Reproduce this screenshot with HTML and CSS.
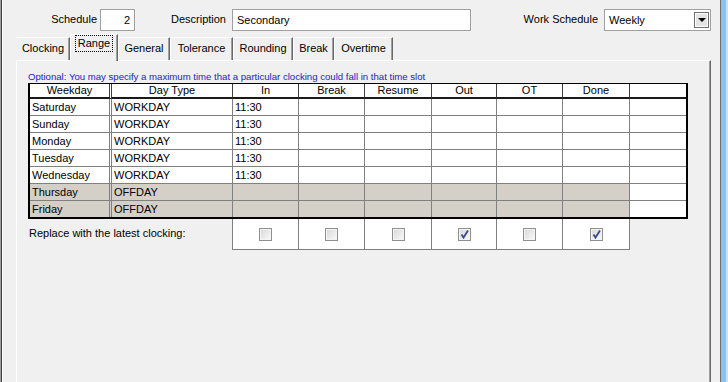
FILE: index.html
```html
<!DOCTYPE html>
<html lang="en">
<head>
    <meta charset="UTF-8">
    <title>Schedule - Range</title>
    <meta name="viewport" content="width=device-width, initial-scale=1.0">
    <link rel="stylesheet" href="styles.css">
</head>
<body>
    <div class="window">
        <div class="form_row">
            <label class="field_label lbl_schedule">Schedule</label>
            <div class="textbox tb_schedule">2</div>
            <label class="field_label lbl_desc">Description</label>
            <div class="textbox tb_desc">Secondary</div>
            <label class="field_label lbl_work">Work Schedule</label>
            <div class="combo">
                <span class="combo_text">Weekly</span>
                <span class="combo_btn"><span class="arrow"></span></span>
            </div>
        </div>

        <div class="tabs">
            <div class="tab tab_clocking">Clocking</div>
            <div class="tab tab_range active"><span class="focus">Range</span></div>
            <div class="tab tab_general">General</div>
            <div class="tab tab_tolerance">Tolerance</div>
            <div class="tab tab_rounding">Rounding</div>
            <div class="tab tab_break">Break</div>
            <div class="tab tab_overtime">Overtime</div>
        </div>

        <div class="panel">
            <p class="hint">Optional: You may specify a maximum time that a particular clocking could fall in that time slot</p>

            <div class="grid">
                <div class="cell head fixed">Weekday</div>
                <div class="cell head">Day Type</div>
                <div class="cell head">In</div>
                <div class="cell head">Break</div>
                <div class="cell head">Resume</div>
                <div class="cell head">Out</div>
                <div class="cell head">OT</div>
                <div class="cell head">Done</div>
                <div class="cell head last"></div>

                <div class="cell fixed">Saturday</div>
                <div class="cell">WORKDAY</div>
                <div class="cell">11:30</div>
                <div class="cell"></div>
                <div class="cell"></div>
                <div class="cell"></div>
                <div class="cell"></div>
                <div class="cell"></div>
                <div class="cell last"></div>

                <div class="cell fixed">Sunday</div>
                <div class="cell">WORKDAY</div>
                <div class="cell">11:30</div>
                <div class="cell"></div>
                <div class="cell"></div>
                <div class="cell"></div>
                <div class="cell"></div>
                <div class="cell"></div>
                <div class="cell last"></div>

                <div class="cell fixed">Monday</div>
                <div class="cell">WORKDAY</div>
                <div class="cell">11:30</div>
                <div class="cell"></div>
                <div class="cell"></div>
                <div class="cell"></div>
                <div class="cell"></div>
                <div class="cell"></div>
                <div class="cell last"></div>

                <div class="cell fixed">Tuesday</div>
                <div class="cell">WORKDAY</div>
                <div class="cell">11:30</div>
                <div class="cell"></div>
                <div class="cell"></div>
                <div class="cell"></div>
                <div class="cell"></div>
                <div class="cell"></div>
                <div class="cell last"></div>

                <div class="cell fixed">Wednesday</div>
                <div class="cell">WORKDAY</div>
                <div class="cell">11:30</div>
                <div class="cell"></div>
                <div class="cell"></div>
                <div class="cell"></div>
                <div class="cell"></div>
                <div class="cell"></div>
                <div class="cell last"></div>

                <div class="cell fixed off">Thursday</div>
                <div class="cell off">OFFDAY</div>
                <div class="cell off"></div>
                <div class="cell off"></div>
                <div class="cell off"></div>
                <div class="cell off"></div>
                <div class="cell off"></div>
                <div class="cell off"></div>
                <div class="cell last"></div>

                <div class="cell fixed off bottom">Friday</div>
                <div class="cell off bottom">OFFDAY</div>
                <div class="cell off bottom"></div>
                <div class="cell off bottom"></div>
                <div class="cell off bottom"></div>
                <div class="cell off bottom"></div>
                <div class="cell off bottom"></div>
                <div class="cell off bottom"></div>
                <div class="cell last bottom"></div>
            </div>

            <div class="replace_row">
                <span class="replace_label">Replace with the latest clocking:</span>
                <div class="check_cells">
                    <div class="check_cell w66"><span class="checkbox"></span></div>
                    <div class="check_cell w66"><span class="checkbox"></span></div>
                    <div class="check_cell w67"><span class="checkbox"></span></div>
                    <div class="check_cell w65"><span class="checkbox checked"><svg width="11" height="11" viewBox="0 0 11 11"><polyline points="2.5,5.5 4.5,8.5 9,1.5" fill="none" stroke="#3b4a8c" stroke-width="1.8"/></svg></span></div>
                    <div class="check_cell w66"><span class="checkbox"></span></div>
                    <div class="check_cell w67"><span class="checkbox checked"><svg width="11" height="11" viewBox="0 0 11 11"><polyline points="2.5,5.5 4.5,8.5 9,1.5" fill="none" stroke="#3b4a8c" stroke-width="1.8"/></svg></span></div>
                </div>
            </div>
        </div>
    </div>
</body>
</html>
```

FILE: styles.css
```css
:root {
    --face: #f0f0f0;
    --grid-line: #808080;
    --offday: #d4d0c8;
    --dark: #404040;
    --hint: #2222c8;
}
* {
    box-sizing: border-box;
    margin: 0;
    padding: 0;
}
html, body {
    background: var(--face);
    overflow: hidden;
}
body {
    font-family: "Liberation Sans", Arial, sans-serif;
    font-size: 11px;
    color: #000;
}

/* Window frame */
.window {
    display: flex;
    flex-direction: column;
    width: 728px;
    height: 100vh;
    box-shadow:
        inset 1px 0 0 #a0a0a0,
        inset 2px 0 0 #404040,
        inset 3px 0 0 #ffffff,
        inset -2px 0 0 #c8e2f6,
        inset -7px 0 0 #8ec0e8,
        inset -8px 0 0 #707070;
}

/* Top fields */
.form_row {
    display: flex;
    align-items: center;
    padding-top: 9px;
    height: 31px;
}
.field_label {
    text-align: right;
    line-height: 13px;
    margin-top: -2px;
}
.lbl_schedule {
    width: 97px;
    margin-right: 3px;
}
.lbl_desc {
    width: 91px;
    margin-right: 6px;
}
.lbl_work {
    width: 127px;
    margin-right: 6px;
}
.textbox {
    height: 22px;
    line-height: 20px;
    border: 1px solid #a0a0a0;
    background: #fff;
    padding: 0 4px;
}
.tb_schedule {
    width: 35px;
    text-align: right;
}
.tb_desc {
    width: 239px;
}
.combo {
    display: flex;
    align-items: center;
    width: 107px;
    height: 22px;
    border: 1px solid #a0a0a0;
    background: #fff;
    padding: 0 1px 0 4px;
}
.combo_text {
    flex: 1;
}
.combo_btn {
    display: flex;
    align-items: center;
    justify-content: center;
    width: 15px;
    height: 16px;
    border: 1px solid #6e6e6e;
    box-shadow: inset 0 0 0 1px #fff;
    background: #e4e4e4;
}
.combo_btn .arrow {
    width: 0;
    height: 0;
    border-left: 4px solid transparent;
    border-right: 4px solid transparent;
    border-top: 4px solid #000;
}

/* Tabs */
.tabs {
    display: flex;
    align-items: flex-end;
    height: 29px;
    padding-left: 16px;
}
.tab {
    height: 23px;
    line-height: 21px;
    text-align: center;
    border-top: 1px solid #fff;
    border-left: 1px solid #fff;
    border-right: 1px solid #696969;
    box-shadow: inset -1px 0 0 #a0a0a0;
    background: var(--face);
}
.tab.active {
    position: relative;
    z-index: 1;
    height: 27px;
    margin-bottom: -1px;
    line-height: 15px;
}
.tab .focus {
    display: inline-block;
    border: 1px dotted #000;
    padding: 0 2px;
    line-height: 15px;
}
.tab_clocking { width: 54px; border-left-color: var(--face); }
.tab_range { width: 48px; }
.tab_general { width: 52px; }
.tab_tolerance { width: 63px; }
.tab_rounding { width: 60px; }
.tab_break { width: 41px; }
.tab_overtime { width: 59px; }

/* Panel */
.panel {
    flex: 1;
    width: 695px;
    margin-left: 16px;
    border-top: 1px solid #fff;
    border-left: 1px solid #fff;
    border-right: 1px solid #696969;
    box-shadow: inset -1px 0 0 #a0a0a0;
    padding: 9px 0 0 11px;
}
.hint {
    font-size: 9.6px;
    line-height: 13px;
    color: var(--hint);
}

/* Grid */
.grid {
    display: grid;
    grid-template-columns: 82px 121px 66px 66px 67px 65px 66px 67px 56px;
    width: 660px;
    border-top: 1px solid #000;
    border-left: 2px solid #000;
    border-right: 2px solid #000;
    border-bottom: 2px solid #000;
    background: #fff;
}
.cell {
    height: 17px;
    line-height: 16px;
    padding-left: 2px;
    white-space: nowrap;
    overflow: hidden;
    border-right: 1px solid var(--grid-line);
    border-bottom: 1px solid var(--grid-line);
}
.cell.fixed {
    border-right: 3px double var(--grid-line);
}
.cell.last {
    border-right: none;
}
.cell.bottom {
    height: 16px;
    border-bottom: none;
}
.cell.off {
    background: var(--offday);
}
.cell.head {
    height: 15px;
    line-height: 13px;
    padding-left: 0;
    text-align: center;
    background: #fff;
    border-right-color: var(--dark);
    border-bottom: 2px solid #1a1a1a;
}
.cell.head.fixed {
    border-right: 3px double var(--dark);
}

/* Replace row */
.replace_row {
    display: flex;
}
.replace_label {
    width: 204px;
    padding: 8px 0 0 1px;
    line-height: 13px;
}
.check_cells {
    display: flex;
    border-left: 1px solid var(--grid-line);
}
.check_cell {
    display: flex;
    align-items: center;
    justify-content: center;
    height: 31px;
    background: #fff;
    border-right: 1px solid var(--grid-line);
    border-bottom: 1px solid var(--grid-line);
}
.w65 { width: 65px; }
.w66 { width: 66px; }
.w67 { width: 67px; }
.checkbox {
    display: flex;
    align-items: center;
    justify-content: center;
    width: 13px;
    height: 13px;
    border: 1px solid #8f8f8f;
    box-shadow: inset 0 0 0 1px #f4f4f4;
    background: linear-gradient(135deg, #d6d6d6, #fbfbfb);
}
```
